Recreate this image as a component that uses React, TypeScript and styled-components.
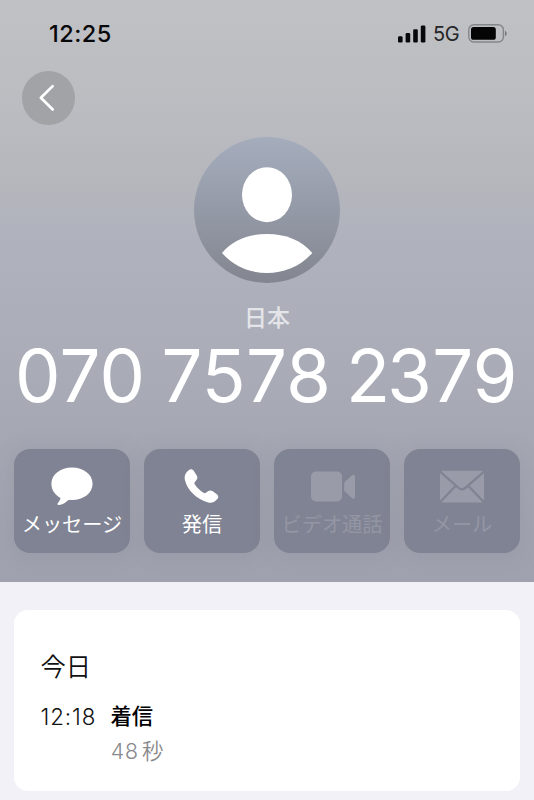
import React, { ReactElement } from 'react'
import styled, { createGlobalStyle } from 'styled-components'

const GlobalStyle = createGlobalStyle`
  * {
    box-sizing: border-box;
  }
  body {
    margin: 0;
    background-color: #f2f1f7;
    font-family: Inter, 'Noto Sans CJK JP', sans-serif;
  }
`

const Screen = styled.main`
  width: 534px;
  height: 800px;
  overflow: hidden;
  background-color: #f2f1f7;
`

const Header = styled.header`
  display: flex;
  flex-direction: column;
  height: 581.5px;
  background: linear-gradient(#c0c1c4 0, #bbbcc1 110px, #b5b6bc 190px, #b0b3bd 230px, #abadb8 340px, #a5a7b3 440px, #9fa1ae 581px);
`

const StatusBar = styled.div`
  display: flex;
  align-items: center;
  justify-content: space-between;
  height: 67px;
  padding: 0 26px 0 49px;
`

const Clock = styled.span`
  font-size: 23.5px;
  font-weight: 500;
  letter-spacing: 0.45px;
  color: #08080a;
`

const StatusIcons = styled.div`
  display: flex;
  align-items: center;
`

const Network = styled.span`
  width: 27px;
  margin: 1px 8px 0 7px;
  font-size: 20px;
  letter-spacing: -0.3px;
  color: #252528;
`

const BackButton = styled.button`
  display: flex;
  align-items: center;
  justify-content: center;
  width: 53.5px;
  height: 54px;
  margin: 4px 0 0 21.7px;
  padding: 0;
  border: none;
  border-radius: 50%;
  background-color: #a2a3a7;
`

const Avatar = styled.svg`
  align-self: center;
  margin-top: 12px;
`

const Country = styled.div`
  height: 34px;
  margin-top: 17.5px;
  font-size: 23px;
  font-weight: 500;
  line-height: 34px;
  text-align: center;
  color: #e4e5e9;
`

const PhoneNumber = styled.h1`
  height: 87px;
  margin: -3px 0 0;
  padding-right: 6px;
  font-size: 72.5px;
  font-weight: 400;
  font-variant-numeric: tabular-nums;
  line-height: 87px;
  letter-spacing: -4.8px;
  word-spacing: 2.9px;
  text-align: center;
  white-space: nowrap;
  color: #fff;
`

const Actions = styled.div`
  display: grid;
  grid-template-columns: repeat(4, 116px);
  gap: 14px;
  margin: 30px 0 0 14px;
`

const Action = styled.button<{ $disabled?: boolean }>`
  display: flex;
  flex-direction: column;
  align-items: center;
  height: 104.5px;
  padding: 14px 0 0;
  border: none;
  border-radius: 16px;
  background-color: #808393;
  box-shadow: 0 2px 22px rgba(100, 103, 120, 0.16);
  font-family: inherit;
  color: ${p => (p.$disabled ? '#999ba8' : '#fff')};
`

const ActionLabel = styled.span<{ $dim?: boolean }>`
  height: 28px;
  font-size: 20.2px;
  font-weight: 400;
  line-height: 28px;
  white-space: nowrap;
  color: ${p => (p.$dim ? '#9496a4' : '#fff')};
`

const HistoryCard = styled.section`
  height: 181px;
  margin: 28.5px 14px 0;
  padding: 38px 26.5px 0;
  border-radius: 14px;
  background-color: #fff;
`

const Day = styled.h2`
  height: 38px;
  margin: 0;
  font-size: 25.3px;
  font-weight: 350;
  line-height: 38px;
  color: #111;
`

const Call = styled.div`
  display: grid;
  grid-template-columns: 70px 1fr;
  margin-top: 13px;
  line-height: 35px;
`

const CallTime = styled.span`
  font-size: 22.3px;
  font-weight: 350;
  letter-spacing: 0.9px;
  color: #111;
`

const CallType = styled.span`
  font-size: 21.3px;
  font-weight: 500;
  color: #000;
`

const Duration = styled.span`
  grid-column: 2;
  font-size: 21.5px;
  font-weight: 350;
  font-variant-numeric: tabular-nums;
  word-spacing: -2px;
  color: #8a8a8e;
`

const MessageIcon = () => (
  <svg width='50' height='48' viewBox='0 0 50 48' fill='currentColor'>
    <path d='M25 4.500c11.600 0 20.600 7 20.600 16.300s-9 16.300-20.600 16.300c-1.200 0-2.400-.1-3.500-.2-2.700 2.600-6.200 4.700-9.600 5.100-1.500.2-1.900-1-1-2 1.400-1.500 2.400-3.200 2.600-5C8 32 4.400 27 4.400 20.800 4.400 11.500 13.400 4.500 25 4.500z' />
  </svg>
)

const PhoneIcon = () => (
  <svg width='50' height='48' viewBox='0 0 50 48' fill='currentColor'>
    <path
      transform='translate(.2 .6) scale(.92)'
      d='M12.500 7.200c1.900-1.500 4-1.200 5.400.7l3.300 5c1.200 1.900.9 3.400-.4 5.200l-1.600 2c-.7.900-.6 1.700 0 2.700 2.500 3.700 5.500 6.600 9.300 9 1.100.6 1.900.6 2.800-.1l2.100-1.600c1.500-1.200 3.200-1.300 4.900-.2l4.800 3.300c1.900 1.400 2 3.500.5 5.400-2.700 3.300-5.900 4.600-10 3.600C21.400 39.200 10.700 28.600 8.300 17.600c-.9-4.100.6-7.700 4.200-10.400z'
    />
  </svg>
)

const VideoIcon = () => (
  <svg width='50' height='48' viewBox='0 0 50 48' fill='currentColor'>
    <rect x='4' y='8.500' width='31' height='30' rx='5' />
    <path d='M37.200 19.600 44.800 12.400c1.500-1.400 3.200-.8 3.200 1.100v20.300c0 1.900-1.700 2.500-3.200 1.100l-7.600-7.200z' />
  </svg>
)

const MailIcon = () => (
  <svg width='50' height='48' viewBox='0 0 50 48'>
    <rect x='3' y='7.800' width='44' height='31.700' rx='3' fill='currentColor' />
    <path d='M3 8.600 21.800 25q3.200 2.700 6.400 0L47 8.600M3 39.200 18.800 22.800M47 39.200 31.200 22.800' fill='none' stroke='#808393' strokeWidth='2.300' />
  </svg>
)

const actions = [
  { label: 'メッセージ', icon: <MessageIcon />, disabled: false },
  { label: '発信', icon: <PhoneIcon />, disabled: false },
  { label: 'ビデオ通話', icon: <VideoIcon />, disabled: true },
  { label: 'メール', icon: <MailIcon />, disabled: true }
]

const App: React.FunctionComponent = (): ReactElement => {
  return (
    <>
      <GlobalStyle />
      <Screen>
        <Header>
          <StatusBar>
            <Clock>12:25</Clock>
            <StatusIcons>
              <svg width='28' height='18' viewBox='0 0 28 18' fill='#08080a'>
                <rect x='0' y='11.200' width='4.600' height='6.300' rx='1.300' />
                <rect x='7.600' y='8' width='4.600' height='9.500' rx='1.300' />
                <rect x='15.200' y='4.300' width='4.600' height='13.200' rx='1.300' />
                <rect x='22.800' y='0.500' width='4.600' height='17' rx='1.300' />
              </svg>
              <Network>5G</Network>
              <svg width='40' height='19' viewBox='0 0 40 19'>
                <rect x='0.800' y='0.800' width='34.600' height='17.200' rx='5' fill='none' stroke='#85868a' strokeWidth='1.400' />
                <rect x='3' y='3' width='24.800' height='12.800' rx='2.600' fill='#050506' />
                <path d='M37 6.700c2.300 1 2.300 4.500 0 5.500z' fill='#77787c' />
              </svg>
            </StatusIcons>
          </StatusBar>
          <BackButton>
            <svg width='54' height='54' viewBox='0 0 54 54' fill='none' stroke='#fff' strokeWidth='2.700' strokeLinecap='round' strokeLinejoin='round'>
              <path d='M31 15 19 26.800l12 11.800' />
            </svg>
          </BackButton>
          <Avatar width='146' height='146' viewBox='0 0 146 146'>
            <defs>
              <linearGradient id='avatar' x1='0' y1='0' x2='0' y2='1'>
                <stop offset='0' stopColor='#a5adbd' />
                <stop offset='1' stopColor='#838690' />
              </linearGradient>
            </defs>
            <circle cx='73' cy='73' r='73' fill='url(#avatar)' />
            <ellipse cx='73' cy='57.700' rx='25' ry='27.500' fill='#fff' />
            <path d='M28 116C39 103 54 97 73 97s34 6 45.300 19C106 129.500 90 136 73 136s-33-6.500-45-20z' fill='#fff' />
          </Avatar>
          <Country>日本</Country>
          <PhoneNumber>070 7578 2379</PhoneNumber>
          <Actions>
            {actions.map(a => (
              <Action key={a.label} $disabled={a.disabled}>
                {a.icon}
                <ActionLabel $dim={a.disabled}>{a.label}</ActionLabel>
              </Action>
            ))}
          </Actions>
        </Header>
        <HistoryCard>
          <Day>今日</Day>
          <Call>
            <CallTime>12:18</CallTime>
            <CallType>着信</CallType>
            <Duration>48 秒</Duration>
          </Call>
        </HistoryCard>
      </Screen>
    </>
  )
}

export default App
